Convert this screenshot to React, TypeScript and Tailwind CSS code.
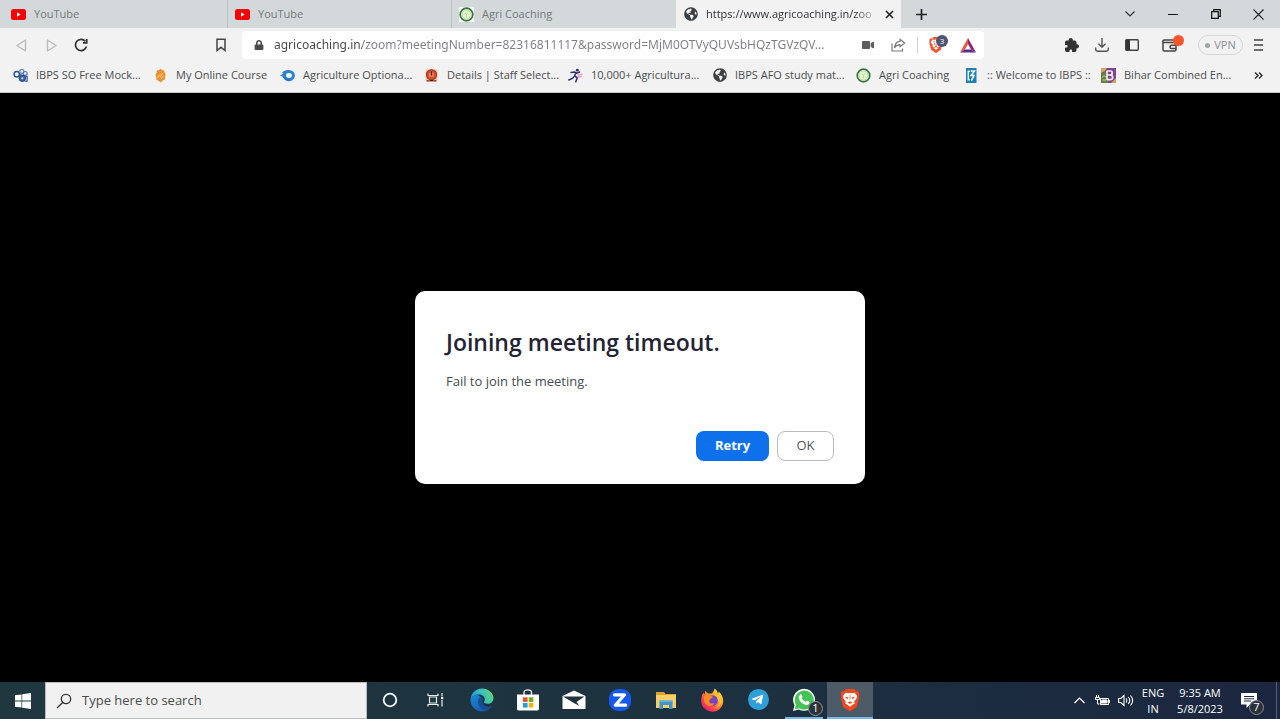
import { ReactNode, useState } from "react";
import { FaGlobeAmericas, FaLock, FaTelegramPlane, FaVideo, FaWhatsapp } from "react-icons/fa";
import { IoExtensionPuzzle } from "react-icons/io5";
import { SiBrave } from "react-icons/si";

const YoutubeIcon = () => (
  <svg width="15" height="15" viewBox="0 0 15 15" aria-hidden="true">
    <rect x="0" y="2" width="15" height="11" rx="2.5" fill="#f60000" />
    <path d="M6 5.3 9.8 7.5 6 9.7z" fill="#fff" />
  </svg>
);

const AgriIcon = () => (
  <svg width="15" height="15" viewBox="0 0 15 15" aria-hidden="true">
    <rect width="15" height="15" fill="#f4faf4" />
    <circle cx="7.5" cy="7.5" r="6.3" fill="#e2f3d2" stroke="#3b7345" strokeWidth="1.7" />
    <circle cx="7.5" cy="7.5" r="4.6" fill="none" stroke="#b4dba1" strokeWidth="0.8" />
    <path d="M7.5 10.5V7.500M6 6.500c1 0 1.500.5 1.500 1.200M9 6c-1 0-1.500.6-1.500 1.500" stroke="#c3d97c" strokeWidth="0.900" fill="none" />
  </svg>
);

const GlobeIcon = () => (
  <span className="flex size-[15px] items-center justify-center">
    <FaGlobeAmericas className="size-[14px] text-[#3c4043]" aria-hidden="true" />
  </span>
);

const MockIcon = () => (
  <svg width="15" height="15" viewBox="0 0 15 15" fill="none" aria-hidden="true">
    <circle cx="3.8" cy="6.3" r="2.700" stroke="#2c5294" strokeWidth="1.500" />
    <circle cx="8.800" cy="3.400" r="2" stroke="#6f8cba" strokeWidth="1.300" />
    <circle cx="12.200" cy="5.400" r="1.900" stroke="#5878ad" strokeWidth="1.200" />
    <circle cx="9.300" cy="10.300" r="3.200" fill="#3c62a3" stroke="#24477f" />
    <path d="M11.500 8.400h2.600v4.800h-2.600M5.800 5.800l3.400 1.800" stroke="#3c62a3" strokeWidth="1.300" />
    <circle cx="9.300" cy="10.300" r="1.100" fill="#c8d5e9" />
  </svg>
);

const CourseIcon = () => (
  <svg width="15" height="15" viewBox="0 0 15 15" aria-hidden="true">
    <path d="M7.5.7 9 1.9l2.2.5.5 2.2 1 1.7-.7 2.4.2 2.6-2.300 1.200-2.200 2-2.400-1.700-2.100-1.200.1-2.600L2.400 7l1.200-2.200.3-2.300 2.300-.6z" fill="#ee9130" />
    <path d="M5 9.800 6.200 7l1.300 1.500L9.500 5M8 10.800l1.900-2.300" stroke="#fbd9a4" strokeWidth="0.900" fill="none" />
  </svg>
);

const OptionalIcon = () => (
  <svg width="15" height="15" viewBox="0 0 15 15" aria-hidden="true">
    <path d="M0 7.600C1.600 6.600 2.600 5.800 3.300 4.900c-.5 0-1 .1-1.400.2C3.400 3 5.600 2 8.400 2a6 5.600 0 1 1-1 11C4.300 12.300 3.200 10 2.900 8.700z" fill="#2d83cf" />
    <ellipse cx="9" cy="7.500" rx="2.900" ry="2.400" fill="#f4f8fc" />
    <path d="M3.500 9c1.200 2.400 3 3.200 5.600 3" stroke="#1765ae" strokeWidth="1" fill="none" />
  </svg>
);

const StaffIcon = () => (
  <svg width="15" height="15" viewBox="0 0 15 15" aria-hidden="true">
    <rect x="1.500" y="1" width="12" height="13" rx="3" fill="#edc6a8" />
    <circle cx="7.500" cy="6.800" r="5" fill="#d65038" stroke="#a3382a" strokeWidth="1.200" />
    <path d="M5 8.800V6l1.200-1.800h2.600L10 6v2.800z" fill="#e88a49" />
    <path d="M7.500 3.500v4M5.500 12.600h4" stroke="#5b1d17" strokeWidth="1.300" />
    <path d="M2.600 12.800h2.900M9.500 12.800h2.900" stroke="#a44a2a" strokeWidth="1.600" />
  </svg>
);

const RunnerIcon = () => (
  <svg width="15" height="15" viewBox="0 0 15 15" fill="none" aria-hidden="true">
    <circle cx="9.300" cy="2.200" r="1.400" fill="#2a2b68" />
    <path d="M3 4.400 6.600 4l2 1.200 3-1.200M8 4.600 6.400 8.200l-2 2.300L.8 12M6.600 7.800l2.600 2-1.400 4" stroke="#2f3175" strokeWidth="1.500" strokeLinecap="round" />
    <path d="M9.500 6.400c2.300 1.800 3-.8 5-.2M9.200 8.400c2 1.300 3.400-.5 4.700.3" stroke="#e59ac4" strokeWidth="1.300" />
  </svg>
);

const IbpsIcon = () => (
  <svg width="15" height="15" viewBox="0 0 15 15" fill="none" aria-hidden="true">
    <rect x="2" y="0" width="10.500" height="15" fill="#2380ad" />
    <path d="M4.300 2.500v10M4.300 3.300h1.800M4.300 11.800h1.500M6.800 3h3.700L7 7.500h3l-2.600 5.200" stroke="#eaf6fb" strokeWidth="1.500" />
  </svg>
);

const BiharIcon = () => (
  <svg width="15" height="15" viewBox="0 0 15 15" fill="none" aria-hidden="true">
    <rect width="15" height="15" fill="#7e468f" />
    <path d="M0 15V6l4-3 3 3v9z" fill="#61813a" />
    <path d="M0 0h6l-2 3-4 2zM10 15l5-5v5z" fill="#d9a556" />
    <path d="M6 2.500v9.500M6 3h3.200c2.700 0 2.700 4 0 4H6M9.200 7c3.300 0 3.300 4.700 0 4.700H6" stroke="#f5e9f2" strokeWidth="1.700" />
    <path d="M1 9.500c1.600-2 3-2 4-.2M1.500 12h4" stroke="#c9d797" />
  </svg>
);

const CortanaIcon = () => (
  <svg width="16" height="16" viewBox="0 0 16 16" aria-hidden="true">
    <circle cx="8" cy="8" r="6.300" fill="none" stroke="#f3f5f6" strokeWidth="1.800" />
  </svg>
);

const TaskViewIcon = () => (
  <svg width="18" height="16" viewBox="0 0 18 16" fill="none" stroke="#e8ebed" strokeWidth="1.200" aria-hidden="true">
    <path d="M1 1.500v2h10v-2M1 14.500v-2h10v2M2.500 5h7v6h-7zM15 1v3M15 8v6.500" />
    <rect x="14" y="4.800" width="2.200" height="2.400" fill="#fff" stroke="none" />
  </svg>
);

const EdgeIcon = () => (
  <svg width="24" height="24" viewBox="0 0 24 24" aria-hidden="true">
    <defs>
      <linearGradient id="edge-top" x1="0" y1="0.600" x2="1" y2="0.300">
        <stop offset="0" stopColor="#2294dd" />
        <stop offset="0.500" stopColor="#35bfc8" />
        <stop offset="1" stopColor="#68d66a" />
      </linearGradient>
      <linearGradient id="edge-low" x1="0" y1="0" x2="1" y2="1">
        <stop offset="0" stopColor="#1b8bdd" />
        <stop offset="1" stopColor="#12509b" />
      </linearGradient>
    </defs>
    <path d="M.5 12A11.500 11.500 0 0 0 17 22.400c2-.8 3.700-2.300 4.700-4.200-4 1.700-9 .2-9.600-4.200-.2-1.500.2-2.500.9-3.200L8 7C4 7 1 9 .5 12z" fill="url(#edge-low)" />
    <path d="M.5 12C.7 5.500 5.700.5 12 .5S23.500 5 23.500 10c0 3.500-2.500 5.800-5.800 5.800-2.400 0-3.700-.8-3.700-1.700 0-.7.8-1.200.8-2.800C14.800 8.500 12 6.500 8.500 6.500 4.800 6.500 1.500 8.700.5 12z" fill="url(#edge-top)" />
    <path d="M9 10.200c-2.300 3.400-.9 9 4.200 11.300 3 .8 6.400-.6 8.500-3.300-4 1.700-9 .2-9.600-4.200-.2-1.600.4-2.800 1-3.300-1-1.400-2.900-1.800-4.100-.5z" fill="#154f93" />
  </svg>
);

const StoreIcon = () => (
  <svg width="24" height="24" viewBox="0 0 24 24" aria-hidden="true">
    <path d="M8 7V4.500C8 1 15.500 1 15.500 4.500V7" fill="none" stroke="#eceff0" strokeWidth="1.400" />
    <path d="M1 6.500h22v14.300c0 1-.6 1.700-1.600 1.700H2.600c-1 0-1.600-.7-1.600-1.700z" fill="#fff" />
    <path d="M7 9.300h4.600v4.600H7z" fill="#e8502b" />
    <path d="M12.700 9.300h4.600v4.600h-4.600z" fill="#6fb01e" />
    <path d="M7 15h4.600v4.600H7z" fill="#1f9fe3" />
    <path d="M12.700 15h4.600v4.600h-4.600z" fill="#f5b20f" />
  </svg>
);

const MailIcon = () => (
  <svg width="24" height="22" viewBox="0 0 24 22" aria-hidden="true">
    <path d="M.5 7 12 1.500 23.500 7v13H.5z" fill="#fff" />
    <path d="M1 7.500h21.500L14.500 13l2.800 3.800-5-2.600z" fill="#20343f" />
  </svg>
);

const ZoomIcon = () => (
  <svg width="24" height="24" viewBox="0 0 24 24" fill="none" aria-hidden="true">
    <rect x="1" y="1" width="22" height="22" rx="9" fill="#1559ed" />
    <path d="M6.500 6.800h10L7.300 17.200h10.400" stroke="#fff" strokeWidth="3.200" strokeLinejoin="round" strokeLinecap="round" />
  </svg>
);

const FolderIcon = () => (
  <svg width="22" height="20" viewBox="0 0 22 20" aria-hidden="true">
    <path d="M1 2h8l1.500 2H21v14H1z" fill="#dba52d" />
    <path d="M1 5h20v13H1z" fill="#f5d06a" />
    <path d="M4.500 10.500h13V19H14v-4H8v4H4.500z" fill="#3f95c9" />
    <path d="M4.500 10.500h13v1.300h-13z" fill="#6db7de" />
  </svg>
);

const FirefoxIcon = () => (
  <svg width="24" height="24" viewBox="0 0 24 24" aria-hidden="true">
    <defs>
      <linearGradient id="fox" x1="0.900" y1="0.100" x2="0.200" y2="0.900">
        <stop offset="0" stopColor="#ffe23f" />
        <stop offset="0.400" stopColor="#ff9a29" />
        <stop offset="0.800" stopColor="#ff4052" />
        <stop offset="1" stopColor="#e5236c" />
      </linearGradient>
    </defs>
    <path d="M14.500.5c2 1.200 3 3 3.400 5l1-1.800c2.400 2.200 4.300 5.300 4.300 9A11 10.800 0 0 1 1.200 13c0-3.300.8-6.200 2.400-8.500l.6 2C5.300 5 5 3.500 5.700 2.500c.5 1.300 1.400 2.300 2.900 3h3.200C13 4.300 14.300 2.500 14.500.5z" fill="url(#fox)" />
    <circle cx="12.500" cy="12.500" r="5.300" fill="#7543c4" />
    <path d="M4.200 8.500c2-2 4.600-2 6.300-.6l2.400.5c-.2 1.500-1.700 1.700-2.400 2.300-.4 1.300-1.500 1.500-1.300 3 1 2.400 3.500 2.300 5.300 1-1 3.400-6 4.700-8.800 1.400C4 14.300 3.600 11 4.200 8.500z" fill="#ff8a22" />
    <path d="M13 6.500c3.800.3 5.400 3.500 5 7 .8-.6 1.200-1.600 1.300-2.800C20 15 18 19 14 20c5-.5 8-4 7.800-8.500-.6-3.500-4-5.800-8.800-5z" fill="#ffc431" />
  </svg>
);

const TelegramIcon = () => (
  <span className="flex size-[21px] items-center justify-center rounded-full bg-[#2e9fd9]">
    <FaTelegramPlane className="mr-0.5 size-[13px] text-white" aria-hidden="true" />
  </span>
);

const WhatsappIcon = () => (
  <span className="relative flex size-6 items-center justify-center">
    <svg width="24" height="24" viewBox="0 0 24 24" aria-hidden="true">
      <path d="M1 23 2.500 17.300A11 11 0 1 1 6.800 21.500z" fill="#f4faf5" />
      <path d="M2.700 21.300 4 16.800A9.500 9.500 0 1 1 7.300 20.200z" fill="#45c354" />
      <path d="M8.200 6.500c.5-.5 1.100-.4 1.400.2l.8 1.800c.1.400-.9 1.300-.8 1.600.9 1.800 2.200 3 4 3.800.4.100 1.200-1.200 1.600-1.100l1.900.9c.5.300.4 1.600-.2 2.300-.9.900-2.200 1.200-3.700.7-3.200-1.100-5.200-3.200-6.300-6-.5-1.700.2-3.100 1.300-4.200z" fill="#fff" />
    </svg>
    <span className="absolute -right-[7px] -bottom-1 flex size-[15px] items-center justify-center rounded-full border border-[#8b9399] bg-[#2b3338] text-[11px] text-white">
      1
    </span>
  </span>
);

const BraveIcon = () => (
  <svg width="20" height="24" viewBox="0 0 20 24" aria-hidden="true">
    <path d="M6 1h8l2 2 2-.3L19.500 6l-.8 2 .5 2-2.500 9L10 23.500 3.300 19 .8 10l.5-2L.5 6 2 2.700l2 .3z" fill="#f1491f" />
    <path d="m5.500 4.800 2.500.5 2-.3 2 .3 2.500-.5L17 8l-.6 2.500-2.200 3.300.5 1.700-2.200 1.300L10 18.800l-2.500-2-2.200-1.300.5-1.700-2.200-3.300L3 8z" fill="#fff" />
    <path d="m4.800 8.700 3.800.8-1.200 1.800zM15.200 8.700l-3.800.8 1.200 1.800zM7.500 14.300l2.500-.8 2.500.8L10 16z" fill="#f1491f" />
    <path d="M9.300 6.800h1.400l-.2 5.200h-1z" fill="#f9a38b" />
  </svg>
);

const tabs = [
  { title: "YouTube", icon: <YoutubeIcon /> },
  { title: "YouTube", icon: <YoutubeIcon /> },
  { title: "Agri Coaching", icon: <AgriIcon /> },
];

const bookmarks = [
  { title: "IBPS SO Free Mock...", icon: <MockIcon />, width: "w-[140px]" },
  { title: "My Online Course", icon: <CourseIcon />, width: "w-[127px]" },
  { title: "Agriculture Optiona...", icon: <OptionalIcon />, width: "w-[144px]" },
  { title: "Details | Staff Select...", icon: <StaffIcon />, width: "w-[144px]" },
  { title: "10,000+ Agricultura...", icon: <RunnerIcon />, width: "w-[144px]" },
  { title: "IBPS AFO study mat...", icon: <GlobeIcon />, width: "w-[144px]" },
  { title: "Agri Coaching", icon: <AgriIcon />, width: "w-[108px]" },
  { title: ":: Welcome to IBPS ::", icon: <IbpsIcon />, width: "w-[137px]" },
  { title: "Bihar Combined En...", icon: <BiharIcon />, width: "w-[144px]" },
];

const apps = [
  { name: "Cortana", icon: <CortanaIcon />, state: "" },
  { name: "Task View", icon: <TaskViewIcon />, state: "" },
  { name: "Microsoft Edge", icon: <EdgeIcon />, state: "" },
  { name: "Microsoft Store", icon: <StoreIcon />, state: "" },
  { name: "Mail", icon: <MailIcon />, state: "" },
  { name: "Zoom", icon: <ZoomIcon />, state: "" },
  { name: "File Explorer", icon: <FolderIcon />, state: "" },
  { name: "Firefox", icon: <FirefoxIcon />, state: "" },
  { name: "Telegram", icon: <TelegramIcon />, state: "" },
  { name: "WhatsApp", icon: <WhatsappIcon />, state: "open" },
  { name: "Brave", icon: <BraveIcon />, state: "active" },
];

function IconButton({ label, className = "w-[30px]", children }: { label: string; className?: string; children: ReactNode }) {
  return (
    <button aria-label={label} className={`flex h-7 shrink-0 items-center justify-center ${className}`}>
      {children}
    </button>
  );
}

function TabStrip() {
  return (
    <div className="flex h-7 items-stretch bg-[#d3d9da] pl-1 text-[11px]">
      {tabs.map((tab, idx) => (
        <button
          key={idx}
          className={`flex w-56 items-center gap-2 pl-[7px] text-[#74797b] ${idx < 2 ? "border-r border-[#b9c0c2]" : ""}`}
        >
          {tab.icon}
          <span>{tab.title}</span>
        </button>
      ))}
      <div className="flex w-[225px] items-center bg-[#f2f2f2] pr-1 pl-[7px]">
        <button className="flex min-w-0 flex-1 items-center gap-2 text-[#303436]">
          <GlobeIcon />
          <span className="min-w-0 flex-1 mask-r-from-85% text-left whitespace-nowrap">
            https://www.agricoaching.in/zoo
          </span>
        </button>
        <button aria-label="Close tab" className="flex size-4 items-center justify-center">
          <svg width="9" height="9" viewBox="0 0 9 9" stroke="#222" strokeWidth="1.600" aria-hidden="true">
            <path d="m1 1 7 7M8 1 1 8" />
          </svg>
        </button>
      </div>
      <IconButton label="New tab" className="w-10">
        <svg width="11" height="11" viewBox="0 0 11 11" stroke="#222" strokeWidth="1.700" aria-hidden="true">
          <path d="M5.500 0v11M0 5.500h11" />
        </svg>
      </IconButton>
      <div className="ml-auto flex">
        <IconButton label="Search tabs" className="w-[43px]">
          <svg width="10" height="6" viewBox="0 0 10 6" fill="none" stroke="#333" strokeWidth="1.200" aria-hidden="true">
            <path d="m.5.500 4.500 4.500 4.500-4.500" />
          </svg>
        </IconButton>
        <IconButton label="Minimize" className="w-[43px]">
          <svg width="10" height="10" viewBox="0 0 10 10" stroke="#111" aria-hidden="true">
            <path d="M0 5.500h10" />
          </svg>
        </IconButton>
        <IconButton label="Restore" className="w-[43px]">
          <svg width="10" height="10" viewBox="0 0 10 10" fill="none" stroke="#111" strokeWidth="1.200" aria-hidden="true">
            <path d="M.7 2.700h6.600v6.600H.7zM2.700 2.700v-2h6.600v6.600h-2" />
          </svg>
        </IconButton>
        <IconButton label="Close" className="w-[43px]">
          <svg width="11" height="11" viewBox="0 0 11 11" stroke="#222" strokeWidth="1.100" aria-hidden="true">
            <path d="m.5.500 10 10M10.500.500l-10 10" />
          </svg>
        </IconButton>
      </div>
    </div>
  );
}

function Toolbar() {
  const [url, setUrl] = useState(
    "agricoaching.in/zoom?meetingNumber=82316811117&password=MjM0OTVyQUVsbHQzTGVzQV..."
  );

  return (
    <div className="flex h-[34px] items-center bg-[#f2f2f2] px-1.5">
      <IconButton label="Back">
        <svg width="11" height="13" viewBox="0 0 11 13" fill="none" stroke="#b9bbbc" strokeWidth="1.400" strokeLinejoin="round" aria-hidden="true">
          <path d="M9.500 1v11L1 6.500z" />
        </svg>
      </IconButton>
      <IconButton label="Forward">
        <svg width="11" height="13" viewBox="0 0 11 13" fill="none" stroke="#b9bbbc" strokeWidth="1.400" strokeLinejoin="round" aria-hidden="true">
          <path d="M1.500 1v11L10 6.500z" />
        </svg>
      </IconButton>
      <IconButton label="Reload">
        <svg width="14" height="14" viewBox="0 0 14 14" fill="none" stroke="#333" strokeWidth="1.700" aria-hidden="true">
          <path d="M11.300 3.300A5.600 5.600 0 1 0 12.500 8.500" />
          <path d="M9 4.800h3.700V1" strokeWidth="1.800" />
        </svg>
      </IconButton>
      <div className="flex min-w-0 flex-1 items-center pl-[110px]">
        <IconButton label="Bookmark this page">
          <svg width="10" height="14" viewBox="0 0 10 14" fill="none" stroke="#444" strokeWidth="1.500" aria-hidden="true">
            <path d="M1 1.200h8v11.300L5 9.300l-4 3.200z" />
          </svg>
        </IconButton>
        <div className="ml-1.5 flex h-7 min-w-0 flex-1 items-center rounded bg-white pl-3">
          <FaLock className="size-[10px] shrink-0 text-[#4a4a4a]" aria-hidden="true" />
          <input
            aria-label="Address"
            value={url}
            onChange={(e) => setUrl(e.target.value)}
            className="ml-2.5 min-w-0 flex-1 bg-linear-to-r from-[#444] from-[88px] to-[#7c7f80] to-[88px] bg-clip-text font-['Noto_Sans',sans-serif] text-xs text-transparent caret-black outline-none"
          />
          <IconButton label="Camera">
            <FaVideo className="size-3 text-[#5c5e60]" aria-hidden="true" />
          </IconButton>
          <IconButton label="Share">
            <svg width="15" height="14" viewBox="0 0 15 14" fill="none" stroke="#77797b" strokeWidth="1.200" aria-hidden="true">
              <path d="M1 5.500v7.500h10.500v-2.500" />
              <path d="M9 1.200 13.700 5 9 8.800V6.700C6.500 6.700 5 7.600 3.500 9.700 4 6 5.700 3.600 9 3.400z" strokeLinejoin="round" />
            </svg>
          </IconButton>
          <div className="ml-1 h-4 w-px bg-[#cfd1d2]" />
          <button aria-label="Brave Shields" className="relative ml-2.5 flex h-7 w-5 items-center">
            <SiBrave className="size-4 text-[#f0542b]" aria-hidden="true" />
            <span className="absolute top-1 right-0 flex size-3 items-center justify-center rounded-full bg-[#4f5372] text-[8px] text-white">
              3
            </span>
          </button>
          <IconButton label="Rewards" className="ml-1 w-8">
            <svg width="16" height="15" viewBox="0 0 16 15" aria-hidden="true">
              <path d="M8 0 0 14.500l5-3L8 6z" fill="#f0513c" />
              <path d="M8 0v6l3 5.500 5 3z" fill="#8f2470" />
              <path d="M0 14.500h16l-5-3H5z" fill="#53308d" />
            </svg>
          </IconButton>
        </div>
      </div>
      <div className="ml-[73px] flex items-center pr-px">
        <IconButton label="Extensions">
          <IoExtensionPuzzle className="size-4 text-[#333]" aria-hidden="true" />
        </IconButton>
        <IconButton label="Downloads">
          <svg width="14" height="14" viewBox="0 0 14 14" fill="none" stroke="#555" strokeWidth="1.400" aria-hidden="true">
            <path d="M7 0v9M3.500 5.800 7 9.300l3.500-3.500M.7 9.500v2c0 1 .6 1.700 1.600 1.700h9.400c1 0 1.600-.7 1.600-1.700v-2" />
          </svg>
        </IconButton>
        <IconButton label="Sidebar">
          <svg width="14" height="12" viewBox="0 0 14 12" aria-hidden="true">
            <rect x="0.700" y="0.700" width="12.600" height="10.600" rx="1" fill="none" stroke="#444" strokeWidth="1.400" />
            <path d="M1 1h4v10H1z" fill="#333" />
          </svg>
        </IconButton>
        <button aria-label="Wallet" className="relative ml-[7px] flex h-7 w-[30px] items-center justify-center">
          <svg width="15" height="13" viewBox="0 0 15 13" fill="none" stroke="#444" strokeWidth="1.500" aria-hidden="true">
            <path d="M12.500 3.500h-10C.2 3.500.2 1 2.500 1h9M1 2.500v8c0 1 .7 1.500 1.500 1.500h10c.8 0 1.500-.5 1.500-1.500V5c0-1-.7-1.500-1.500-1.500" />
            <path d="M14 6.300H9.500c-2 0-2 3.200 0 3.200H14" />
          </svg>
          <span className="absolute top-1 right-0 size-[11px] rounded-full bg-[#fb542b]" />
        </button>
        <button className="ml-3.5 flex h-5 w-[45px] items-center justify-center gap-1 rounded-full border border-[#d5d7d9] text-[11px] text-[#8b8e90]">
          <span className="size-[5px] rounded-full bg-[#a2a4a7]" />
          VPN
        </button>
        <IconButton label="Menu">
          <svg width="9" height="12" viewBox="0 0 9 12" stroke="#444" strokeWidth="1.500" aria-hidden="true">
            <path d="M0 1h9M0 6h9M0 11h9" />
          </svg>
        </IconButton>
      </div>
    </div>
  );
}

function BookmarksBar() {
  return (
    <nav className="flex h-[31px] items-center border-b border-[#c9cbcc] bg-[#f2f2f2] pb-1 pl-[13px] text-[11px] text-[#4b4e50]">
      {bookmarks.map((b) => (
        <a key={b.title} href="#" className={`flex items-center gap-2 whitespace-nowrap ${b.width}`}>
          <span className="shrink-0">{b.icon}</span>
          {b.title}
        </a>
      ))}
      <button aria-label="More bookmarks" className="mr-[17px] ml-auto">
        <svg width="9" height="7" viewBox="0 0 9 7" fill="none" stroke="#333" strokeWidth="1.500" aria-hidden="true">
          <path d="m1 .5 3 3-3 3M5 .5l3 3-3 3" />
        </svg>
      </button>
    </nav>
  );
}

function Taskbar() {
  return (
    <footer className="flex h-[37px] items-stretch bg-linear-to-r from-[#1f3840] via-[#1d323f] to-[#1b2740] text-white">
      <button aria-label="Start" className="flex w-[45px] items-center justify-center">
        <svg width="16" height="16" viewBox="0 0 16 16" fill="#fff" aria-hidden="true">
          <path d="M0 2.300 6.500 1.400v6.200H0zM7.200 1.300 16 0v7.600H7.200zM0 8.400h6.500v6.200L0 13.700zM7.200 8.400H16V16l-8.800-1.300z" />
        </svg>
      </button>
      <label className="flex w-[322px] items-center border border-[#b9bcbd] bg-[#f1f1f1] pl-2.5">
        <svg width="16" height="16" viewBox="0 0 16 16" fill="none" stroke="#333" strokeWidth="1.300" aria-hidden="true">
          <circle cx="10" cy="6" r="4.700" />
          <path d="M6.700 9.500 1 15" />
        </svg>
        <input
          aria-label="Search"
          placeholder="Type here to search"
          className="ml-2.5 min-w-0 flex-1 text-[13px] outline-none placeholder:text-[#4b4b4b]"
        />
      </label>
      {apps.map((app) => (
        <button
          key={app.name}
          aria-label={app.name}
          className={`flex w-[46px] items-center justify-center ${app.state === "active" ? "bg-[#4c5b65]" : ""}`}
        >
          <span
            className={`flex h-full items-center justify-center border-b-2 ${
              app.state === "" ? "w-full border-transparent" : app.state === "open" ? "w-[38px] border-[#76b9ed]" : "w-full border-[#76b9ed]"
            }`}
          >
            {app.icon}
          </span>
        </button>
      ))}
      <div className="ml-auto flex items-center text-xs">
        <IconButton label="Show hidden icons" className="w-[23px]">
          <svg width="11" height="7" viewBox="0 0 11 7" fill="none" stroke="#fff" strokeWidth="1.200" aria-hidden="true">
            <path d="m.5 6 5-5 5 5" />
          </svg>
        </IconButton>
        <IconButton label="Battery" className="w-[23px]">
          <svg width="16" height="12" viewBox="0 0 16 12" fill="none" stroke="#fff" aria-hidden="true">
            <path d="M5.500 3.500h8v6h-8zM14.500 5v3" />
            <path d="M7 5h5v3H6z" fill="#fff" />
            <path d="M1.500 0v2M3.500 0v2M.5 2.500h4v2h-4zM2.500 4.500V9h2" />
          </svg>
        </IconButton>
        <IconButton label="Volume" className="w-[23px]">
          <svg width="16" height="13" viewBox="0 0 16 13" fill="none" stroke="#fff" strokeWidth="1.100" aria-hidden="true">
            <path d="M.6 4.500h2.200L6 1.500v10L2.800 8.500H.6zM8 4.500c1 1 1 3 0 4M10.200 3c1.800 2 1.800 5 0 7M12.500 1.500c2.600 3 2.600 7 0 10" />
          </svg>
        </IconButton>
        <button className="w-8 text-center text-[11px] leading-4">
          ENG
          <br />
          IN
        </button>
        <button className="w-[62px] text-center text-[11px] leading-4">
          9:35 AM
          <br />
          5/8/2023
        </button>
        <button aria-label="Notifications" className="relative flex h-full w-[46px] items-center justify-center border-r border-[#56606f] pr-2.5">
          <svg width="16" height="15" viewBox="0 0 16 15" aria-hidden="true">
            <path d="M0 0h16v11.500H9L5.500 15v-3.500H0z" fill="#fff" />
            <path d="M3 3.500h10M3 5.800h10M3 8h7" stroke="#1b2a40" />
          </svg>
          <span className="absolute right-3 bottom-1 flex size-[15px] items-center justify-center rounded-full border border-[#858b92] bg-[#2b3138] text-[11px]">
            7
          </span>
        </button>
        <div className="w-[3px]" />
      </div>
    </footer>
  );
}

export default function App() {
  return (
    <div className="flex min-h-screen flex-col bg-black font-['Open_Sans','Noto_Sans',sans-serif]">
      <header>
        <TabStrip />
        <Toolbar />
        <BookmarksBar />
      </header>

      <main className="flex flex-1 items-center justify-center">
        <div role="dialog" aria-labelledby="dialog-title" className="w-[450px] rounded-[10px] bg-white px-[31px] pt-[35px] pb-[23px]">
          <h1 id="dialog-title" className="text-[23px] leading-8 font-semibold text-[#232333]">
            Joining meeting timeout.
          </h1>
          <p className="mt-[13px] text-[13px] leading-5 text-[#444b53]">Fail to join the meeting.</p>
          <div className="mt-10 flex justify-end gap-2">
            <button className="h-[30px] w-[73px] rounded-lg bg-[#0e71eb] text-[13px] font-bold text-white">Retry</button>
            <button className="h-[30px] w-[57px] rounded-lg border border-[#babac0] text-[13px] text-[#4f5560]">OK</button>
          </div>
        </div>
      </main>

      <Taskbar />
    </div>
  );
}
